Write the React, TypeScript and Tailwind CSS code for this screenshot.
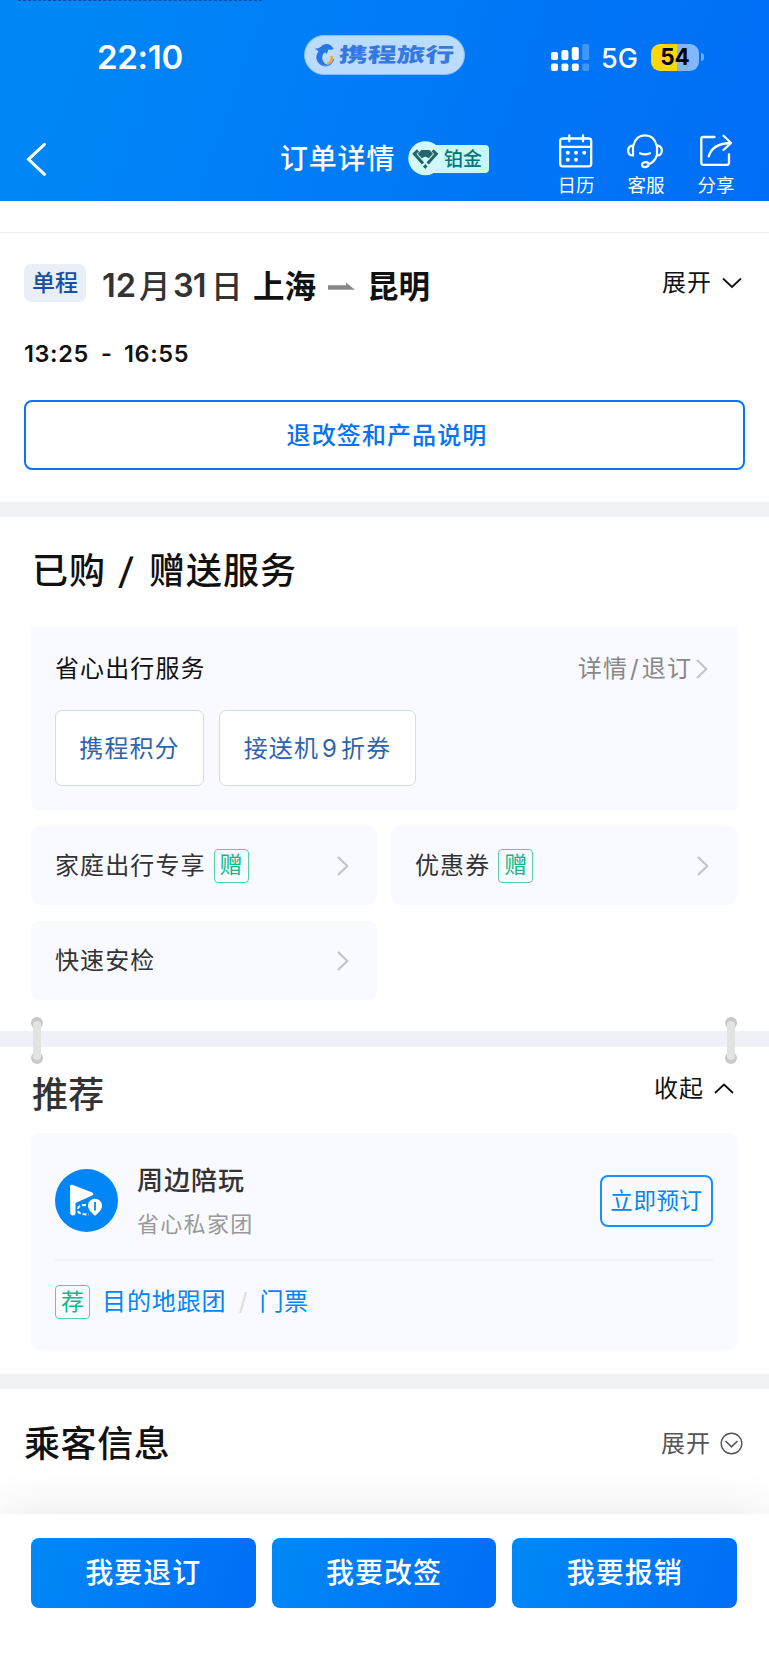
import type { ReactNode } from 'react';

type ServiceItem = {
  name: string;
  gift?: boolean;
};

const serviceItems: ServiceItem[] = [
  { name: '家庭出行专享', gift: true },
  { name: '优惠券', gift: true },
  { name: '快速安检' },
];

const actions = ['我要退订', '我要改签', '我要报销'];

const signalBars = [
  { x: 0, top: 8, opacity: 1 },
  { x: 10.4, top: 6, opacity: 1 },
  { x: 20.8, top: 3, opacity: 1 },
  { x: 31.2, top: 0, opacity: 0.25 },
];

function ChevronRight() {
  return (
    <svg width="12" height="20" viewBox="0 0 12 20" fill="none" stroke="#c4c5c8" strokeWidth="2.2">
      <path d="M1 1 L10.3 10 L1 19" />
    </svg>
  );
}

function GreenTag({ children }: { children: ReactNode }) {
  return (
    <span className="flex h-[34px] w-[35px] items-center justify-center rounded-[4px] border border-[#56cfa8] text-[23px] leading-none tracking-normal text-[#0abb87]">
      {children}
    </span>
  );
}

function StatusBar() {
  return (
    <div className="flex h-[118px] pt-[35px] text-white">
      <div className="ml-[97px] h-[44px] w-[207px] text-[33px] leading-[45px] font-semibold tracking-[-0.3px]">22:10</div>
      <div className="flex h-10 w-[161px] items-center rounded-full border border-[#84bffb] bg-[#bcdcfd] pl-[9px]">
        <svg width="21" height="24" viewBox="0 0 21 24">
          <path
            d="M.5 6 C3 5 5 5.6 6.5 4 C9 1 12 .6 14.5 1.2 C17 1.8 18.3 4 19.8 5.7 C18.2 6.9 16 6.7 13.8 6.4 C14.5 8 13.6 9.6 12.4 11 L11.2 9 C8.6 11 7.6 14 8.6 17 C9.6 20 12 21.7 14.5 21.8 C10 24.6 4.2 21.6 2.8 17 C1.7 13.5 2.6 11.2 4.6 8.6 C3.7 7.4 2.4 6.3 .5 6 Z"
            fill="#2577e3"
          />
          <path d="M8 22 Q16 25 19.7 16" fill="none" stroke="#4b8fe9" strokeWidth="1.6" />
          <path d="M13 20.5 C17 20 18.2 17 17.7 13" fill="none" stroke="#f5a52b" strokeWidth="2.4" />
        </svg>
        <span className="ml-[4px] inline-block origin-left scale-x-[1.44] -skew-x-3 text-[20px] leading-none font-black whitespace-nowrap text-[#3479e2]">
          携程旅行
        </span>
      </div>
      <svg className="mt-[9px] ml-[86px]" width="39" height="28" viewBox="0 0 39 28" fill="white">
        {signalBars.map(bar => (
          <g key={bar.x} opacity={bar.opacity}>
            <rect x={bar.x} y={bar.top} width="7" height={16 - bar.top} rx="2" />
            <rect x={bar.x} y="19.5" width="7" height="7.5" rx="2" />
          </g>
        ))}
      </svg>
      <div className="ml-[11px] w-[50px] text-[27px] leading-[48px] font-medium">5G</div>
      <div className="mt-[9px] flex h-[27px] w-12 items-center justify-center rounded-[9px] bg-linear-to-r from-[#ffd60a] from-[54%] to-[#80b8fb] to-[54%] text-[22.5px] leading-none font-bold text-black">
        54
      </div>
      <div className="mt-[18px] ml-[2px] h-[8px] w-[3px] rounded-r-full bg-[#6aaefb]" />
    </div>
  );
}

function NavBar() {
  return (
    <div className="flex h-[83px] text-white">
      <svg className="mt-[24px] ml-[26px]" width="22" height="35" viewBox="0 0 22 35" fill="none" stroke="white" strokeWidth="3" strokeLinecap="round">
        <path d="M18.5 2.3 L2.5 17.3 L18.5 32.3" />
      </svg>
      <h1 className="mt-[17px] ml-[232px] w-[128px] text-[28px] leading-[49px] font-medium tracking-[0.8px] whitespace-nowrap">订单详情</h1>
      <div className="mt-[23px] flex h-[35px] w-[81px] items-center">
        <svg className="relative z-10" width="35" height="35" viewBox="0 0 35 35">
          <circle cx="17.3" cy="17.3" r="17" fill="#d3fafb" />
          <path d="M13.3 9 H21.3 L25 12.8 L20.8 17.3 L17.3 15.6 L13.8 17.3 L9.6 12.8 Z" fill="#23676b" />
          <path d="M10 9.3 L6.3 12.8 L15 22.6 M24.6 9.3 L28.3 12.8 L19.6 22.6" fill="none" stroke="#23676b" strokeWidth="3" />
          <path d="M17.3 23 L19.6 25.4 L17.3 28 L15 25.4 Z" fill="#23676b" />
        </svg>
        <span className="-ml-[18px] h-7 w-[64px] rounded-[4px] bg-[#c6f8f8] pl-[19px] text-[19px] leading-[29px] font-medium whitespace-nowrap text-[#08737a]">
          铂金
        </span>
      </div>
      <div className="mt-4 ml-[63px] grid grid-cols-[48px_48px_48px] gap-x-[22px] text-[18.5px] leading-none">
        <div className="flex flex-col items-center">
          <svg className="-ml-[1px]" width="36" height="36" viewBox="0 0 36 36" fill="none" stroke="white" strokeWidth="2.3" strokeLinecap="round">
            <rect x="2.2" y="4.5" width="31" height="27.8" rx="2.5" />
            <path d="M2.5 12.8 H33 M11.3 1.5 V7.3 M25 1.5 V7.3" />
            <g fill="white" stroke="none">
              <circle cx="9.8" cy="18.7" r="2" />
              <circle cx="18" cy="18.7" r="2" />
              <circle cx="26.2" cy="18.7" r="2" />
              <circle cx="9.8" cy="25.7" r="2" />
              <circle cx="18" cy="25.7" r="2" />
            </g>
          </svg>
          <span className="mt-[6px]">日历</span>
        </div>
        <div className="flex flex-col items-center">
          <svg className="-ml-[3px]" width="36" height="36" viewBox="0 0 36 36" fill="none" stroke="white" strokeWidth="2.2" strokeLinecap="round">
            <path d="M6.4 11.5 C8 5 12.5 1.4 18 1.4 C23.5 1.4 28 5 29.6 11.5 M6 11.3 C2.6 11.8 1.2 13.5 1.2 16.4 C1.2 19.5 2.8 21.4 6 21.4 Z M30 11.3 C33.4 11.8 34.8 13.5 34.8 16.4 C34.8 19.5 33.2 21.4 30 21.4 Z M13 19.2 Q18 21.6 23 19.2 M29.8 21.4 C28.4 26 25.8 28.8 21.5 30.3" />
            <ellipse cx="18.3" cy="30.6" rx="3.3" ry="2.4" transform="rotate(-12 18.3 30.6)" />
          </svg>
          <span className="mt-[6px]">客服</span>
        </div>
        <div className="flex flex-col items-center">
          <svg width="36" height="36" viewBox="0 0 36 36" fill="none" stroke="white" strokeWidth="2.3" strokeLinecap="round" strokeLinejoin="round">
            <path d="M16.5 3 H5 Q3.3 3 3.3 5 V28.8 Q3.3 30.8 5.3 30.8 H29 Q31 30.8 31 28.8 V20.5 M10.8 22.3 C12.8 15.2 18 9.7 31.5 9 M25.5 1.7 L33 9 L25.5 16" />
          </svg>
          <span className="mt-[6px]">分享</span>
        </div>
      </div>
    </div>
  );
}

function FlightSection() {
  return (
    <section className="h-[269px] px-6 pt-[30px]">
      <div className="flex h-[40px] items-center">
        <span className="flex h-[38px] w-[62px] items-center justify-center rounded-[7px] bg-[#eaeef6] pt-px text-[23px] leading-none font-medium text-[#1450a5]">单程</span>
        <div className="ml-[16px] flex items-center pt-[7px] text-[31.5px] leading-none font-medium whitespace-nowrap text-[#111]">
          <span className="flex w-[151px] items-center text-[#333]">
            <b className="w-[37px] text-[32.5px] font-semibold">12</b>
            <span className="w-[34px]">月</span>
            <b className="w-[38px] text-[32.5px] font-semibold tracking-[-1px]">31</b>
            <span>日</span>
          </span>
          <span className="w-[63px] font-bold">上海</span>
          <svg className="ml-[12px]" width="28" height="10" viewBox="0 0 28 10">
            <path d="M0 3.3 H18 V.5 L27 7.8 H0 Z" fill="#888" />
          </svg>
          <span className="ml-[11px] font-bold">昆明</span>
        </div>
        <button className="-mt-px -mr-[1px] ml-auto flex items-center gap-[10px] text-[24px] leading-none tracking-[1px] text-[#111]">
          展开
          <svg className="mr-[4px]" width="20" height="12" viewBox="0 0 20 12" fill="none" stroke="#111" strokeWidth="1.8">
            <path d="M1 1.5 L10 10 L19 1.5" />
          </svg>
        </button>
      </div>
      <div className="mt-[36px] flex h-[30px] items-center text-[23.5px] leading-none font-semibold tracking-[0.6px] text-[#111]">
        <span className="w-[77px]">13:25</span>
        <span className="w-[23px]">-</span>
        <span>16:55</span>
      </div>
      <button className="mt-[31px] flex h-[70px] w-[721px] items-center justify-center rounded-[8px] border-2 border-[#0a74f8] pt-px pl-[5px] text-[24px] leading-none font-medium tracking-[1.1px] text-[#0673f7]">
        退改签和产品说明
      </button>
    </section>
  );
}

function ServiceSection() {
  return (
    <section className="h-[514px] pr-[32px] pl-[31px] pt-[31px] text-[24px] leading-none tracking-[1.1px] text-[#333]">
      <h2 className="flex h-[44px] items-center pt-px pl-[1px] text-[36px] font-medium tracking-[1px] text-[#111]">
        <span>已购</span>
        <span className="w-[43px] -skew-x-6 pr-[2px] text-center">/</span>
        <span>赠送服务</span>
      </h2>
      <div className="mt-[35px] h-[183px] rounded-bl-[8px] bg-[#f8faff] px-[24px] pt-[26px]">
        <div className="flex h-[32px] items-center justify-between">
          <span className="text-[#111]">省心出行服务</span>
          <button className="flex items-center gap-[4px] pr-[5px] text-[#888]">
            <span>
              详情<span className="mx-[2px]">/</span>退订
            </span>
            <ChevronRight />
          </button>
        </div>
        <div className="mt-[25px] flex gap-[15px] text-[#2f64ad]">
          <span className="flex h-[76px] w-[149px] items-center justify-center rounded-[7px] border border-[#d0dae8] bg-white pt-px">携程积分</span>
          <span className="flex h-[76px] w-[197px] items-center justify-center rounded-[7px] border border-[#d0dae8] bg-white pt-px">
            接送机<span className="mx-[3px]">9</span>折券
          </span>
        </div>
      </div>
      <div className="mt-[16px] grid grid-cols-2 gap-x-[14px] gap-y-4">
        {serviceItems.map(item => (
          <div key={item.name} className="flex h-[79px] items-center rounded-[8px] bg-[#f9faff] pr-[28px] pl-[24px]">
            <span className="mr-[8px]">{item.name}</span>
            {item.gift && <GreenTag>赠</GreenTag>}
            <span className="ml-auto">
              <ChevronRight />
            </span>
          </div>
        ))}
      </div>
    </section>
  );
}

// Ring that hooks two cards together across the divider
function Binder() {
  return (
    <svg width="12" height="47" viewBox="0 0 12 47">
      <circle cx="6" cy="6" r="6" fill="#c9c9c9" />
      <circle cx="6" cy="41" r="6" fill="#c9c9c9" />
      <rect x="2" y="4" width="8" height="39" rx="4" fill="#e3e3e3" />
    </svg>
  );
}

function RecommendSection() {
  return (
    <section className="h-[327px] pr-[32px] pl-[31px] pt-[26px] leading-none">
      <div className="flex h-[44px] items-center justify-between">
        <h2 className="pl-[1px] text-[36px] font-medium tracking-[0.3px] text-[#333]">推荐</h2>
        <button className="-mt-[12px] flex items-center gap-[10px] pr-[3px] text-[24px] tracking-[1px] text-[#111]">
          收起
          <svg width="20" height="12" viewBox="0 0 20 12" fill="none" stroke="#111" strokeWidth="1.8">
            <path d="M1 10 L10 1.5 L19 10" />
          </svg>
        </button>
      </div>
      <div className="mt-4 h-[217px] rounded-[8px] bg-[#f9faff] px-[24px] pt-[34px]">
        <div className="flex h-[94px] border-b-2 border-[#f0f2f6]">
          <svg className="mt-[2px]" width="63" height="63" viewBox="0 0 63 63">
            <circle cx="31.5" cy="31.5" r="31.5" fill="#0086f6" />
            <path d="M15 17.5 Q15 15.2 17.4 15.8 L37.2 23.4 Q39.6 24.8 37.2 26.5 L20.5 34 V44.5 Q20.5 46.5 18 46.5 Q15.3 46.5 15.3 44.5 Z" fill="white" />
            <path d="M31 36 C25 35.5 22.8 38 22.8 40.5 C22.8 44 25 45.5 34 45.5" fill="none" stroke="white" strokeWidth="2" strokeDasharray="4 2" />
            <path d="M40 29.8 C44 29.8 47 32.8 47 36.8 C47 41 43 44.4 40 46.7 C37 44.4 33 41 33 36.8 C33 32.8 36 29.8 40 29.8 Z" fill="white" />
            <path d="M40 33 V41.5" stroke="#0086f6" strokeWidth="1.8" />
          </svg>
          <div className="ml-[19px] flex flex-col">
            <span className="text-[26px] leading-[28px] font-medium tracking-[1px] text-[#333]">周边陪玩</span>
            <span className="mt-4 text-[22px] leading-[27px] tracking-[1.3px] text-[#999]">省心私家团</span>
          </div>
          <button className="mt-2 ml-auto h-[52px] w-[113px] rounded-[8px] border-2 border-[#1a8ff7] text-[22.5px] tracking-[0.6px] whitespace-nowrap text-[#0086f6]">
            立即预订
          </button>
        </div>
        <div className="mt-[24px] flex items-center text-[24px] text-[#0086f6]">
          <GreenTag>荐</GreenTag>
          <span className="ml-[12px] tracking-[0.9px]">目的地跟团</span>
          <span className="w-[33px] text-center text-[#ddd]">/</span>
          <span className="tracking-[0.6px]">门票</span>
        </div>
      </div>
    </section>
  );
}

export default function OrderDetail() {
  return (
    <main className="h-[1665px] w-[769px] overflow-hidden bg-white font-['Inter','Noto_Sans_CJK_SC',sans-serif]">
      <header className="relative h-[201px] bg-linear-[110deg] from-[#0089f6] to-[#006df7]">
        <div className="absolute top-0 left-[18px] h-px w-[244px] border-t border-dashed border-[#0a4da0]" />
        <StatusBar />
        <NavBar />
      </header>
      <div className="h-[32px] border-b border-[#eee]" />
      <FlightSection />
      <div className="h-[15px] bg-[#f0f2f6]" />
      <ServiceSection />
      <div className="relative h-4 bg-[#f0f1f6]">
        <div className="absolute -top-[14px] left-[31px]">
          <Binder />
        </div>
        <div className="absolute -top-[14px] right-[32px]">
          <Binder />
        </div>
      </div>
      <RecommendSection />
      <div className="h-[15px] bg-[#f0f2f6]" />
      <section className="flex h-[125px] items-start justify-between pt-[32px] pr-[26px] pl-6 leading-none">
        <h2 className="text-[36px] leading-[46px] font-medium tracking-[0.6px] text-[#111]">乘客信息</h2>
        <button className="mt-[10px] flex items-center gap-[9px] text-[24px] leading-[26px] tracking-[1px] text-[#555]">
          展开
          <svg className="-mt-px" width="23" height="23" viewBox="0 0 23 23" fill="none" stroke="#555" strokeWidth="1.4">
            <circle cx="11.5" cy="11.5" r="10.3" />
            <path d="M5.5 9 L11.5 14.8 L17.5 9" strokeWidth="1.6" />
          </svg>
        </button>
      </section>
      <footer className="relative flex h-[151px] gap-[16px] bg-white pr-[32px] pl-[31px] pt-6 shadow-[0_12px_60px_rgba(0,0,0,0.16)]">
        {actions.map(label => (
          <button
            key={label}
            className="h-[70px] flex-1 rounded-[8px] bg-linear-[110deg] from-[#0089f6] to-[#006df7] text-[28px] leading-none font-medium tracking-[1px] text-white"
          >
            {label}
          </button>
        ))}
      </footer>
    </main>
  );
}
